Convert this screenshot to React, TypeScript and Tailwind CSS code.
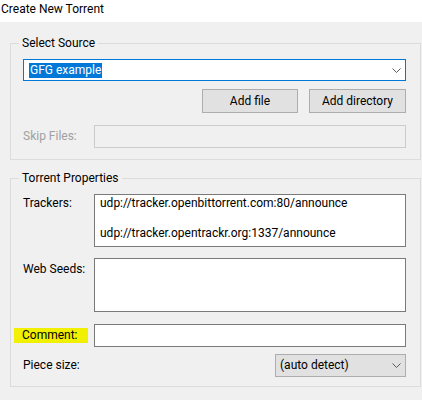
import React from "react";

function Chevron() {
  return (
    <svg width="9" height="5" viewBox="0 0 9 5" className="shrink-0">
      <path d="M0.5 0.5 L4.5 4.5 L8.5 0.5" fill="none" stroke="#5a5a5a" strokeWidth="1" />
    </svg>
  );
}

export default function App() {
  return (
    <div className="w-[422px] h-[400px] overflow-hidden bg-[#f0f0f0] font-['Segoe_UI',Roboto,sans-serif] text-[12px] leading-[15px] text-black">
      <div className="h-[22px] bg-white pl-[1px] pt-[2px]">Create New Torrent</div>

      <div className="pl-[10px] pt-[13px]">
        {/* Select Source */}
        <fieldset className="w-[411px] border border-[#dcdcdc]">
          <legend className="ml-[8px] px-[3px] leading-[16px]">Select Source</legend>
          <div className="pl-[12px] pr-[14px] pb-[11px] pt-[8px]">
            <div className="flex h-[22px] items-center justify-between border border-[#0078d7] bg-white pl-[5px] pr-[4px]">
              <span className="bg-[#0078d7] px-[1px] text-white">GFG example</span>
              <Chevron />
            </div>
            <div className="mt-[8px] flex justify-end gap-[11px]">
              <button className="h-[24px] w-[96px] border border-[#adadad] bg-[#e1e1e1]">Add file</button>
              <button className="h-[24px] w-[97px] border border-[#adadad] bg-[#e1e1e1]">Add directory</button>
            </div>
            <div className="mt-[12px] flex items-center">
              <span className="w-[71px] text-[#a0a0a0]">Skip Files:</span>
              <div className="h-[23px] flex-1 border border-[#cccccc] bg-[#f0f0f0]" />
            </div>
          </div>
        </fieldset>

        {/* Torrent Properties */}
        <fieldset className="mt-[10px] w-[411px] border border-[#dcdcdc]">
          <legend className="ml-[8px] px-[3px] leading-[16px]">Torrent Properties</legend>
          <div className="pl-[12px] pr-[14px] pb-[9px] pt-[8px]">
            <div className="flex items-start">
              <span className="w-[71px] pt-[2px]">Trackers:</span>
              <div className="h-[53px] flex-1 border border-[#7a7a7a] bg-white pl-[5px] pt-[1px]">
                <div>udp://tracker.openbittorrent.com:80/announce</div>
                <div>&nbsp;</div>
                <div>udp://tracker.opentrackr.org:1337/announce</div>
              </div>
            </div>
            <div className="mt-[11px] flex items-start">
              <span className="w-[71px] pt-[4px]">Web Seeds:</span>
              <div className="h-[54px] flex-1 border border-[#7a7a7a] bg-white" />
            </div>
            <div className="mt-[12px] flex items-center">
              <div className="w-[71px]">
                <span className="-ml-[9px] block w-[74px] bg-[#f0f000] pl-[8px]">Comment:</span>
              </div>
              <div className="h-[23px] flex-1 border border-[#7a7a7a] bg-white" />
            </div>
            <div className="mt-[7px] flex items-center justify-between">
              <span>Piece size:</span>
              <div className="flex h-[23px] w-[131px] items-center justify-between border border-[#adadad] bg-[#e1e1e1] pl-[4px] pr-[4px]">
                <span>(auto detect)</span>
                <Chevron />
              </div>
            </div>
          </div>
        </fieldset>
      </div>
    </div>
  );
}
